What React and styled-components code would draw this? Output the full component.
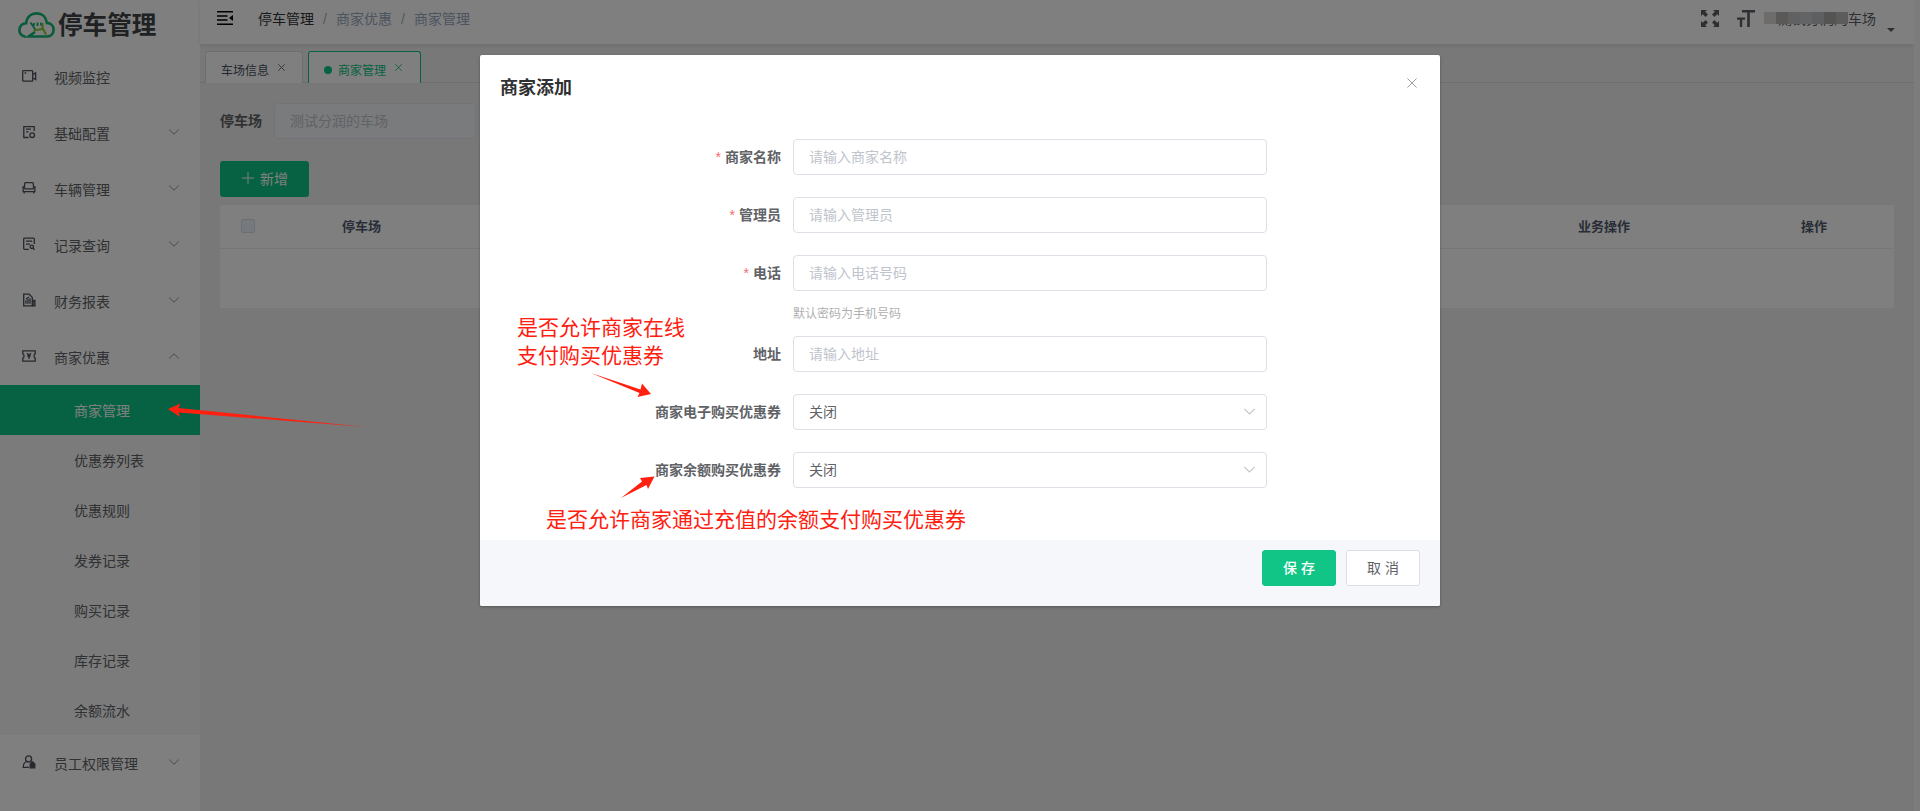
import styled, { createGlobalStyle } from "styled-components";

const menus = [
  { label: "视频监控", icon: "video" },
  { label: "基础配置", icon: "config", arrow: true },
  { label: "车辆管理", icon: "car", arrow: true },
  { label: "记录查询", icon: "record", arrow: true },
  { label: "财务报表", icon: "report", arrow: true },
  {
    label: "商家优惠",
    icon: "coupon",
    arrow: true,
    children: [
      "商家管理",
      "优惠券列表",
      "优惠规则",
      "发券记录",
      "购买记录",
      "库存记录",
      "余额流水",
    ],
  },
  { label: "员工权限管理", icon: "user", arrow: true },
];

const fields = [
  { label: "商家名称", placeholder: "请输入商家名称", required: true },
  { label: "管理员", placeholder: "请输入管理员", required: true },
  {
    label: "电话",
    placeholder: "请输入电话号码",
    required: true,
    tip: "默认密码为手机号码",
  },
  { label: "地址", placeholder: "请输入地址" },
  { label: "商家电子购买优惠券", value: "关闭" },
  { label: "商家余额购买优惠券", value: "关闭" },
];

const mosaic = ["#dad8d6", "#b4b2b0", "#c2c3c3", "#c6c8ca", "#bcbec2", "#a9a8a7", "#b8b8b8"];

const icons = {
  video: (
    <>
      <rect x="1.7" y="2.6" width="10" height="10.6" rx="0.8" />
      <path d="M3.6 5h1.6M12 6.4l2.6-1.5v6.6L12 10" />
    </>
  ),
  config: (
    <>
      <path d="M13.2 7V2.6H2.8v10.9h4.8M5 5.2h5M5 7.8h2.4" />
      <circle cx="11.2" cy="11.2" r="2.3" />
    </>
  ),
  car: (
    <path d="M3.6 6.5V3.8c0-.7.4-1.2 1.1-1.2h6.6c.7 0 1.1.5 1.1 1.2v2.7M1.3 6.9h1.9l.8 2h8l.8-2h1.9M2.2 7.2v4.5h11.6V7.2M3.2 11.8v1.6M12.8 11.8v1.6" />
  ),
  record: (
    <>
      <path d="M13.3 8V3c0-.5-.3-.8-.8-.8h-9c-.5 0-.8.3-.8.8v9.6c0 .5.3.8.8.8h4.3M5 5.2h6.2M5 8.2h4" />
      <circle cx="10.8" cy="10.8" r="1.7" />
      <path d="M12 12.2l1.5 1.5" />
    </>
  ),
  report: (
    <>
      <path d="M11.3 13.8H2.7V2.2h5.5l3.1 3.2zM5 8.2v3.6M7 7v4.8M9 6.2v5.6M5 7l3-2" />
      <path d="M11.6 8.5h2.3v5.3h-2.3z" fill="#8a8e98" />
    </>
  ),
  coupon: (
    <>
      <path d="M1.8 2.8h12.4v3c-1.6.4-1.6 4 0 4.4v3H1.8v-3c1.6-.4 1.6-4 0-4.4z" />
      <path d="M6 5.2l2 2.2 2-2.2M8 7.2V11M6.3 8h3.4" />
    </>
  ),
  user: (
    <>
      <circle cx="7.6" cy="4.9" r="3" />
      <path d="M5.6 7.5c-2.2.8-3.4 2.7-3.4 5.900h5.700" />
      <path d="M9.200 9.800h4.600v4H9.200zM10.300 9.500c0-2.200 2.400-2.200 2.400 0" fill="#4c515c" />
    </>
  ),
};

const Chevron = ({ up, color = "#909399", size = 12 }) => (
  <svg width={size} height={size} viewBox="0 0 12 12" fill="none" stroke={color}>
    <path d={up ? "M1.2 8.4L6 3.8l4.8 4.6" : "M1.2 3.6L6 8.2l4.8-4.6"} />
  </svg>
);

const Cross = ({ size, color }) => (
  <svg width={size} height={size} viewBox="0 0 10 10" fill="none" stroke={color}>
    <path d="M.4.4l9.2 9.2M9.6.4L.4 9.6" strokeWidth={9 / size} />
  </svg>
);

const CloudLogo = () => (
  <svg width="37" height="27" viewBox="0 0 37 27" fill="none" strokeWidth="2.6">
    <path
      d="M7.5 24.6C3.6 24 1.4 21.300 1.4 18c0-3.900 3-6.800 6.800-6.800C8.800 5 13 1.400 18.600 1.400c5.600 0 9.600 3.600 10.300 9.500 4 .2 6.700 3.100 6.700 6.900 0 4-2.700 6.700-6.600 6.700H10.500l6.500-4.500"
      stroke="#12b676"
    />
    <path d="M12.500 10.500l5.500 8M16 13.500v-2.500M19.500 14v-3.500M23 13.500v-3" stroke="#12b676" strokeWidth="1.900" />
    <path d="M15.500 18.500l9-1.500M24.500 11v5l3.500 6.500" stroke="#8ccb3e" strokeWidth="2.200" />
  </svg>
);

const Sidebar = () => (
  <Aside>
    <Brand>
      <CloudLogo />
      <BrandName>停车管理</BrandName>
    </Brand>
    {menus.map((menu) => (
      <div key={menu.label}>
        <MenuItem>
          <svg width="16" height="16" viewBox="0 0 16 16" fill="none" stroke="#4c515c" strokeWidth="1.3">
            {icons[menu.icon]}
          </svg>
          <MenuLabel>{menu.label}</MenuLabel>
          {menu.arrow && <Chevron up={!!menu.children} />}
        </MenuItem>
        {menu.children && (
          <SubMenu>
            {menu.children.map((name, i) => (
              <SubItem key={name} $active={i === 0}>
                {name}
              </SubItem>
            ))}
          </SubMenu>
        )}
      </div>
    ))}
  </Aside>
);

const Navbar = () => (
  <Header>
    <svg width="16" height="14" viewBox="0 0 16 14">
      <path d="M0 0h16v1.600H0zM0 4.200h10.500v1.600H0zM0 8.200h10.500v1.600H0zM0 12.400h16V14H0zM16 4v6l-4-3z" fill="#000" />
    </svg>
    <Crumbs>
      <b>停车管理</b>
      <i>/</i>
      <span>商家优惠</span>
      <i>/</i>
      <span>商家管理</span>
    </Crumbs>
    <Tools>
      <svg width="18" height="17" viewBox="0 0 18 17" fill="#5a5e66">
        <path d="M0 0h6L4.200 1.800 7 4.600 4.600 7 1.800 4.200 0 6zM18 0v6l-1.800-1.800L13.400 7 11 4.600l2.800-2.800L12 0zM0 17v-6l1.800 1.800L4.600 10 7 12.400l-2.800 2.800L6 17zM18 17h-6l1.800-1.800L11 12.400l2.400-2.400 2.800 2.800L18 11z" />
      </svg>
      <svg width="18" height="17" viewBox="0 0 18 17" fill="#5a5e66">
        <path d="M5 0h13v2.500h-5.200V17h-2.600V2.500H5zM0 7.500h8v2.200H5.200V17H2.800V9.700H0z" />
      </svg>
      <Account>
        <Mosaic>
          {mosaic.map((color) => (
            <Block key={color} $color={color} />
          ))}
        </Mosaic>
        测试分润的车场
      </Account>
      <Caret />
    </Tools>
  </Header>
);

const MerchantPage = () => (
  <Content>
    <Filter>
      <b>停车场</b>
      <FilterSelect>测试分润的车场</FilterSelect>
    </Filter>
    <AddButton>
      <svg width="12" height="12" viewBox="0 0 12 12" stroke="#fff">
        <path d="M6 0v12M0 6h12" />
      </svg>
      新增
    </AddButton>
    <Table>
      <TableHead>
        <Checkbox />
        <span>停车场</span>
        <span />
        <span>业务操作</span>
        <span>操作</span>
      </TableHead>
    </Table>
  </Content>
);

const MerchantDialog = () => (
  <Dialog>
    <DialogHeader>
      商家添加
      <Cross size={10} color="#909399" />
    </DialogHeader>
    <Form>
      {fields.map((field) => (
        <FormItem key={field.label}>
          <FieldLabel $required={field.required}>{field.label}</FieldLabel>
          <div>
            <Input $filled={!!field.value}>
              {field.value || field.placeholder}
              {field.value && <Chevron color="#c0c4cc" size={13} />}
            </Input>
            {field.tip && <Tip>{field.tip}</Tip>}
          </div>
        </FormItem>
      ))}
    </Form>
    <DialogFooter>
      <Button $primary>保存</Button>
      <Button>取消</Button>
    </DialogFooter>
  </Dialog>
);

const App = () => (
  <Screen>
    <GlobalStyle />
    <Sidebar />
    <Main>
      <Navbar />
      <Tabs>
        <Tab>
          车场信息
          <Cross size={7} color="#5a5e66" />
        </Tab>
        <Tab $active>
          商家管理
          <Cross size={7} color="#10c586" />
        </Tab>
      </Tabs>
      <MerchantPage />
    </Main>
    <ScrollTrack />
    <Overlay>
      <MerchantDialog />
    </Overlay>
    <Arrows width="1920" height="811" viewBox="0 0 1920 811">
      <path d="M168 409l12.500-5.500-2 4.500L366 427 178.500 412.500l1.500 4.500z" />
      <path d="M591 373l49.500 16.500 1.500-6 9 10.500-13.500 3 2-4z" />
      <path d="M621 498l21-16.500-2-3.500 14.500-1.500-6.500 12.500-1.500-4z" />
    </Arrows>
    <Note $x={517} $y={314}>
      是否允许商家在线
      <br />
      支付购买优惠券
    </Note>
    <Note $x={546} $y={506}>
      是否允许商家通过充值的余额支付购买优惠券
    </Note>
  </Screen>
);

const GlobalStyle = createGlobalStyle`
  * {
    box-sizing: border-box;
  }
  body {
    margin: 0;
    overflow: hidden;
    font-family: "Liberation Sans", "Noto Sans CJK SC", sans-serif;
    font-size: 14px;
    color: #606266;
  }
  svg {
    flex-shrink: 0;
  }
`;

const Screen = styled.div`
  position: relative;
  display: flex;
  width: 1920px;
  height: 811px;
  overflow: hidden;
  background: #f0f0f0;
`;

const Aside = styled.aside`
  width: 200px;
  background: #fff;
`;
const Brand = styled.div`
  display: flex;
  align-items: center;
  gap: 3px;
  height: 49px;
  padding: 2px 0 0 18px;
`;
const BrandName = styled.div`
  color: #3f4245;
  font-size: 24.6px;
  font-weight: 700;
  line-height: 30px;
  white-space: nowrap;
`;
const MenuItem = styled.div`
  display: flex;
  align-items: center;
  height: 56px;
  padding: 0 20px 2px 21px;
`;
const MenuLabel = styled.span`
  flex: 1;
  padding: 2px 0 0 17px;
`;
const SubMenu = styled.div`
  background: #f7f7f7;
`;
const SubItem = styled.div`
  height: 50px;
  padding-left: 74px;
  line-height: 53px;
  color: ${(props) => (props.$active ? "#fff" : "#606266")};
  background: ${(props) => (props.$active ? "#0ec586" : "transparent")};
`;

const Main = styled.main`
  flex: 1;
  min-width: 0;
`;
const Header = styled.header`
  display: flex;
  align-items: center;
  height: 44px;
  padding: 0 20px 8px 17px;
  background: #fff;
  box-shadow: 0 1px 4px rgba(0, 21, 41, 0.12);
`;
const Crumbs = styled.nav`
  display: flex;
  flex: 1;
  margin-left: 25px;
  color: #97a8be;
  b {
    color: #303133;
    font-weight: 400;
  }
  i {
    margin: 0 9px;
    width: 4px;
    padding-top: 3px;
    font-style: normal;
    color: #a8abb2;
  }
`;
const Tools = styled.div`
  display: flex;
  align-items: center;
  gap: 18px;
  margin-right: -1px;
`;
const Account = styled.div`
  position: relative;
  margin-left: 5px;
  color: #5a5e66;
`;
const Mosaic = styled.div`
  position: absolute;
  display: flex;
  left: -14px;
  top: 4px;
`;
const Block = styled.span`
  width: 12px;
  height: 12px;
  background: ${(props) => props.$color};
`;
const Caret = styled.span`
  margin: 23px 0 0 -7px;
  border: 4px solid transparent;
  border-top-color: #5a5e66;
  border-bottom: 0;
`;

const Tabs = styled.div`
  display: flex;
  align-items: flex-end;
  gap: 5px;
  height: 39px;
  padding-left: 5px;
  border-bottom: 1px solid #d8dce5;
`;
const Tab = styled.div`
  display: flex;
  align-items: center;
  gap: 9px;
  height: 32px;
  margin-bottom: -1px;
  padding: 4px ${(props) => (props.$active ? 18 : 17)}px 0 15px;
  border: 1px solid ${(props) => (props.$active ? "#0ec586" : "#d8dce5")};
  border-bottom: 0;
  border-radius: 3px 3px 0 0;
  background: #fff;
  color: ${(props) => (props.$active ? "#0ec586" : "#495060")};
  font-size: 12px;
  svg {
    margin-top: -4px;
  }
  &::before {
    content: "";
    display: ${(props) => (props.$active ? "block" : "none")};
    width: 8px;
    height: 8px;
    margin-right: -3px;
    border-radius: 50%;
    background: #0ec586;
  }
`;

const Content = styled.section`
  padding: 20px 20px 0;
`;
const Filter = styled.div`
  display: flex;
  align-items: center;
  gap: 12px;
  b {
    padding-bottom: 2px;
  }
`;
const FilterSelect = styled.div`
  width: 202px;
  height: 36px;
  padding-left: 15px;
  border: 1px solid #e4e7ed;
  border-radius: 4px;
  background: #f5f7fa;
  color: #c0c4cc;
  line-height: 34px;
`;
const AddButton = styled.div`
  display: flex;
  align-items: center;
  justify-content: center;
  gap: 6px;
  width: 89px;
  height: 36px;
  margin: 22px 0 8px;
  padding: 0 0 2px 1px;
  border-radius: 3px;
  background: #0ec586;
  color: #fff;
`;
const Table = styled.div`
  height: 103px;
  background: #fff;
`;
const TableHead = styled.div`
  display: grid;
  grid-template-columns: 56px 171px 1027px 260px 160px;
  align-items: center;
  height: 44px;
  padding-bottom: 2px;
  border-bottom: 1px solid #ebeef5;
  color: #515a6e;
  font-size: 13px;
  font-weight: 700;
  text-align: center;
`;
const Checkbox = styled.span`
  width: 14px;
  height: 14px;
  justify-self: center;
  border: 1px solid #dcdfe6;
  border-radius: 2px;
  background: #edf2fc;
`;
const ScrollTrack = styled.div`
  width: 6px;
  background: #f8f8f8;
`;

const Overlay = styled.div`
  position: absolute;
  inset: 0;
  display: flex;
  align-items: flex-start;
  justify-content: center;
  padding-top: 55px;
  background: rgba(0, 0, 0, 0.5);
`;
const Dialog = styled.div`
  display: flex;
  flex-direction: column;
  width: 960px;
  height: 551px;
  border-radius: 2px;
  overflow: hidden;
  background: #fff;
  box-shadow: 0 1px 3px rgba(0, 0, 0, 0.3);
`;
const DialogHeader = styled.div`
  display: flex;
  justify-content: space-between;
  padding: 21px 23px 0 20px;
  color: #303133;
  font-size: 18px;
  font-weight: 700;
  line-height: 24px;
  svg {
    margin-top: 2px;
  }
`;
const Form = styled.div`
  display: flex;
  flex: 1;
  flex-direction: column;
  gap: 22px;
  padding-top: 39px;
`;
const FormItem = styled.div`
  display: grid;
  grid-template-columns: 301px 474px;
  column-gap: 12px;
`;
const FieldLabel = styled.label`
  font-weight: 700;
  line-height: 36px;
  text-align: right;
  &::before {
    content: "${(props) => (props.$required ? "*" : "")}";
    margin-right: 4px;
    color: #f56c6c;
    font-weight: 400;
  }
`;
const Input = styled.div`
  display: flex;
  align-items: center;
  justify-content: space-between;
  height: 36px;
  padding: 0 10px 2px 15px;
  border: 1px solid #dcdfe6;
  border-radius: 4px;
  color: ${(props) => (props.$filled ? "#606266" : "#c0c4cc")};
`;
const Tip = styled.div`
  height: 23px;
  padding-top: 14px;
  color: #b0b0b0;
  font-size: 12px;
  line-height: 18px;
`;
const DialogFooter = styled.div`
  display: flex;
  justify-content: flex-end;
  gap: 10px;
  height: 66px;
  padding: 10px 20px;
  background: #f5f7fb;
`;
const Button = styled.div`
  width: 74px;
  height: 36px;
  padding-left: 20px;
  border: 1px solid ${(props) => (props.$primary ? "#10c586" : "#dcdfe6")};
  border-radius: 3px;
  background: ${(props) => (props.$primary ? "#10c586" : "#fff")};
  color: ${(props) => (props.$primary ? "#fff" : "#606266")};
  font-weight: ${(props) => (props.$primary ? 500 : 400)};
  line-height: 34px;
  letter-spacing: 4px;
`;

const Arrows = styled.svg`
  position: absolute;
  inset: 0;
  fill: #ff2010;
`;
const Note = styled.div`
  position: absolute;
  left: ${(props) => props.$x}px;
  top: ${(props) => props.$y}px;
  color: #ff2010;
  font-size: 21px;
  line-height: 28px;
  white-space: nowrap;
`;

export default App;
